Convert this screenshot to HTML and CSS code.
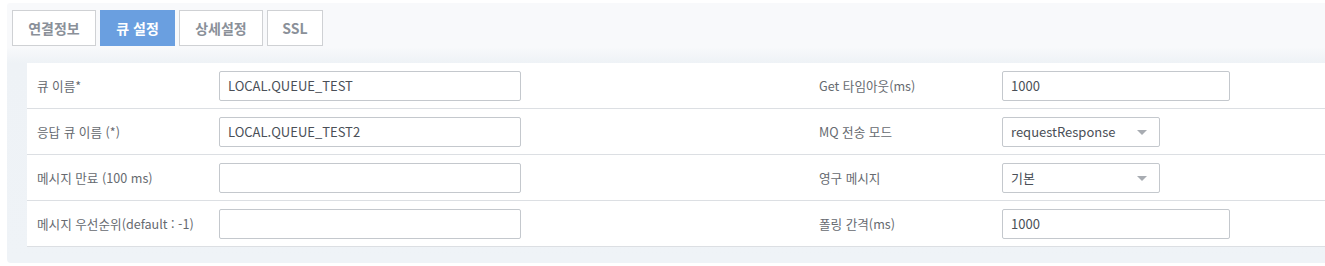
FILE: index.html
```html
<!DOCTYPE html>
<html lang="ko">
<head>
<meta charset="utf-8">
<link rel="stylesheet" href="styles.css">
</head>
<body>
<div class="panel">
  <div class="tabs">
    <div class="tab">연결정보</div>
    <div class="tab active">큐 설정</div>
    <div class="tab">상세설정</div>
    <div class="tab">SSL</div>
  </div>
  <div class="form">
    <div class="row">
      <div class="label">큐 이름*</div>
      <div class="cell"><div class="input wide">LOCAL.QUEUE_TEST</div></div>
      <div class="label">Get 타임아웃(ms)</div>
      <div class="cell"><div class="input mid">1000</div></div>
    </div>
    <div class="row">
      <div class="label">응답 큐 이름 (*)</div>
      <div class="cell"><div class="input wide">LOCAL.QUEUE_TEST2</div></div>
      <div class="label">MQ 전송 모드</div>
      <div class="cell"><div class="input select">requestResponse<span class="caret"></span></div></div>
    </div>
    <div class="row">
      <div class="label">메시지 만료 (100 ms)</div>
      <div class="cell"><div class="input wide"></div></div>
      <div class="label">영구 메시지</div>
      <div class="cell"><div class="input select">기본<span class="caret"></span></div></div>
    </div>
    <div class="row">
      <div class="label">메시지 우선순위(default : -1)</div>
      <div class="cell"><div class="input wide"></div></div>
      <div class="label">폴링 간격(ms)</div>
      <div class="cell"><div class="input mid">1000</div></div>
    </div>
  </div>
</div>
</body>
</html>
```
FILE: styles.css
```css
html, body {
  margin: 0;
  padding: 0;
  background: #ffffff;
  font-family: "Noto Sans CJK KR", "Noto Sans", sans-serif;
  overflow: hidden;
}
body {
  padding: 3px 0 0 7px;
}
.panel {
  background: linear-gradient(#f8f9fb 0, #f8f9fb 44px, #eef2f6 60px, #eff3f7 100%);
  border-radius: 3px 0 0 4px;
  padding: 7px 0 16px 0;
}
.tabs {
  display: flex;
  gap: 4px;
  margin-left: 5px;
}
.tab {
  box-sizing: border-box;
  height: 36px;
  padding: 0;
  border: 1px solid #cfd1d4;
  background: #ffffff;
  color: #8a9099;
  font-size: 14px;
  font-weight: bold;
  line-height: 34px;
  text-align: center;
  white-space: nowrap;
}
.tab:nth-child(1) { width: 84px; }
.tab:nth-child(3) { width: 84px; }
.tab:nth-child(4) { width: 56px; }
.tab.active {
  width: 75px;
  background: #6a9fe0;
  border-color: #6a9fe0;
  color: #ffffff;
}
.form {
  margin: 17px 0 0 20px;
  background: #ffffff;
}
.row {
  display: grid;
  grid-template-columns: 192px 590px 193px 1fr;
  height: 45px;
  align-items: center;
  border-bottom: 1px solid #dcdfe3;
}
.label {
  padding-left: 10px;
  font-size: 12.6px;
  color: #666a70;
  white-space: nowrap;
}
.input {
  box-sizing: border-box;
  height: 30px;
  border: 1px solid #c4c8cd;
  border-radius: 2px;
  background: #ffffff;
  padding: 0 8px;
  font-size: 13px;
  line-height: 28px;
  color: #4a4f57;
  position: relative;
}
.input.wide { width: 302px; }
.input.mid { width: 228px; }
.input.select { width: 158px; }
.caret {
  position: absolute;
  right: 12px;
  top: 12px;
  width: 0;
  height: 0;
  border-left: 5px solid transparent;
  border-right: 5px solid transparent;
  border-top: 5px solid #a8acb2;
}
```
